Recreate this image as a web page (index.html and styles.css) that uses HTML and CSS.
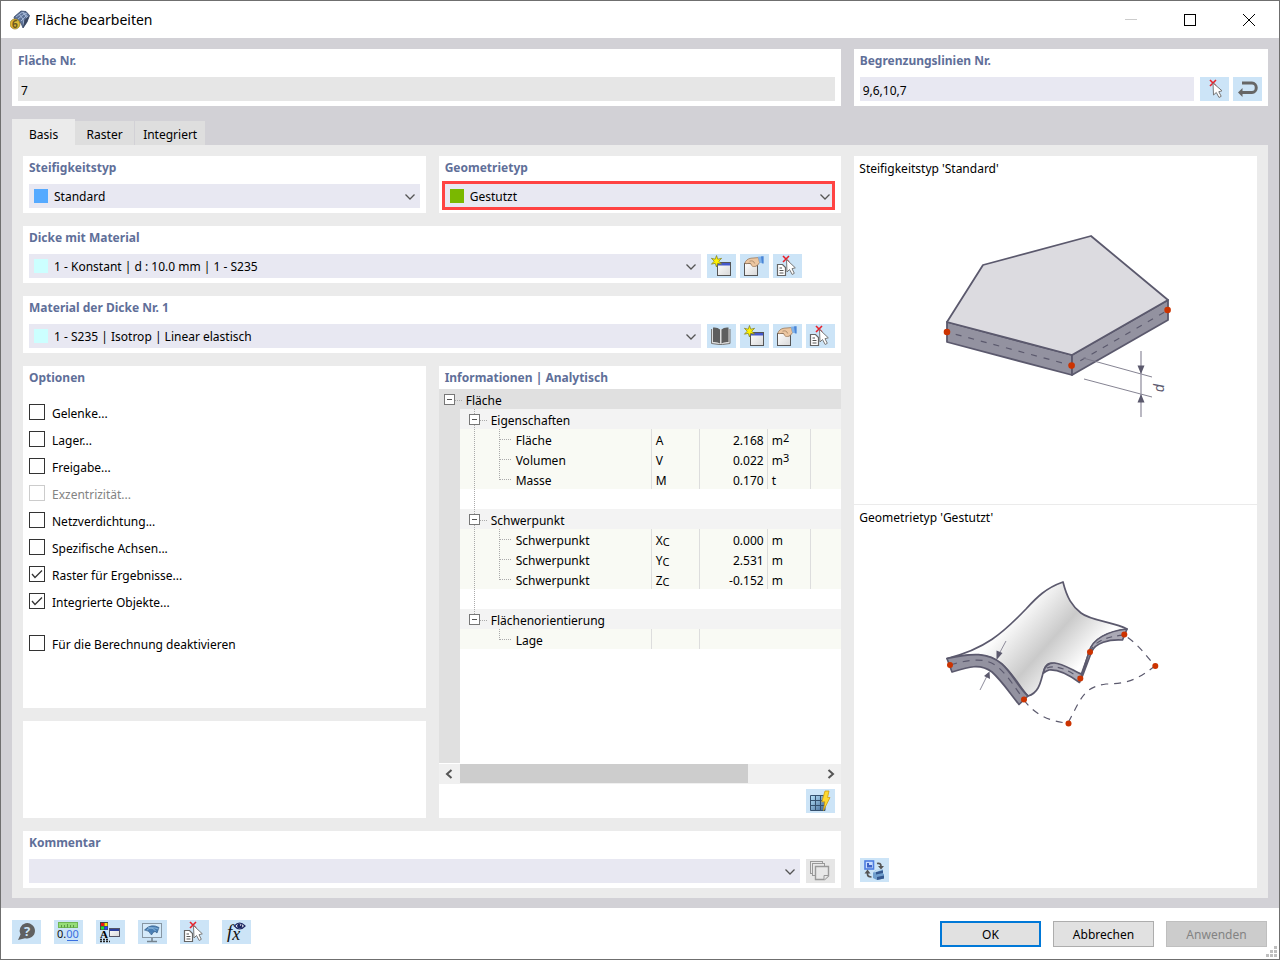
FILE: index.html
```html
<!DOCTYPE html>
<html lang="de">
  <head>
    <meta charset="utf-8">
    <title>Fläche bearbeiten</title>
    <link rel="stylesheet" href="styles.css">
  </head>
  <body>
    <!-- shared icons -->
    <svg width="0" height="0" class="sprite" aria-hidden="true">
      <defs>
        <linearGradient id="gWin" x1="0" y1="0" x2="1" y2="1">
          <stop offset="0" stop-color="#fff"/><stop offset="1" stop-color="#d8d8d8"/>
        </linearGradient>
        <linearGradient id="gGrid" x1="0" y1="0" x2="1" y2="1">
          <stop offset="0" stop-color="#b9e4fb"/><stop offset="1" stop-color="#3f6594"/>
        </linearGradient>
        <linearGradient id="gSheet" gradientUnits="userSpaceOnUse" x1="52" y1="24" x2="168" y2="128">
          <stop offset="0.1" stop-color="#fff"/><stop offset="0.25" stop-color="#fcfcfc"/><stop offset="0.53" stop-color="#cacaca"/><stop offset="0.78" stop-color="#fff"/><stop offset="1" stop-color="#bbb"/>
        </linearGradient>
      </defs>
      <symbol id="chevron" viewBox="0 0 10 6">
        <path d="M0.5 0.5L5 5L9.500 0.5" fill="none" stroke="#555" stroke-width="1.300"/>
      </symbol>
      <symbol id="new" viewBox="0 0 29 24">
        <rect x="10.500" y="8.500" width="13" height="13" fill="url(#gWin)" stroke="#555"/>
        <path d="M11 9h12v2.500H11z" fill="#4458cc"/>
        <path d="M9.500 1.500L10.800 5.200L14.600 4.300L11.800 7.200L14.600 10.200L10.700 9.300L9.500 13L8.200 9.300L4.400 10.200L7.200 7.200L4.400 4.300L8.200 5.200Z" fill="#fff200" stroke="#7d7a20" stroke-width="0.700"/>
      </symbol>
      <symbol id="edit" viewBox="0 0 29 24">
        <rect x="4.500" y="9.500" width="13" height="12" fill="url(#gWin)" stroke="#555"/>
        <path d="M12 9h5v3h-5z" fill="#4458cc"/>
        <path d="M4.800 9.300C5.500 6.500 8 4.600 11 4.200L18.500 3.600L19.500 8.500C18 11 16.500 12.600 14.800 12.400C13.300 12.800 11.500 12.300 10.800 9.700C8.500 8.500 6.500 10.500 4.800 9.300Z" fill="#ecc6a0" stroke="#9b7a5c" stroke-width="0.800"/>
        <path d="M9.500 7.200C12 6.400 14 7 14.700 9.500" fill="none" stroke="#9b7a5c" stroke-width="0.700"/>
        <path d="M17.800 2.800L23.500 2.300V9.500L19.500 8.700Z" fill="#80b2ea"/>
        <path d="M21 2.500L23.500 2.300V9.500L22 9.200Z" fill="#4a85d6"/>
      </symbol>
      <symbol id="delete" viewBox="0 0 29 24">
        <path d="M4.500 10.500h5l3 3v8h-8z" fill="#fff" stroke="#666" stroke-width="1.200"/>
        <path d="M6.500 14h2.500M6.500 16.500h4M6.500 19h4" stroke="#555"/>
        <path d="M10 2l6 6M16 2l-6 6" stroke="#e8202a" stroke-width="1.600"/>
        <path d="M13.500 5.500L14 18L16.500 15.500L19.200 20.500L21.300 19.300L19 14.700L22.300 13.800Z" fill="#fff" stroke="#777"/>
      </symbol>
    </svg>

    <div class="window">
      <header class="titlebar">
        <svg class="app-icon" width="20" height="20" viewBox="0 0 20 20">
          <path d="M4 7L11 1L16 1.500L19.500 5.500L17 12L13 18L11 13L5 11Z" fill="#5c7196" stroke="#394a6b" stroke-width="0.800"/>
          <path d="M6 7L12 2.500L17 4M8 9L14 4L18.500 7M11 11L16 6M9 4L13 9L14 15M13 2L17 8" fill="none" stroke="#a9bcdb" stroke-width="0.900"/>
          <path d="M13 18L14.500 10L19.500 5.500L17 12Z" fill="#39455e"/>
          <circle cx="5" cy="14" r="5" fill="#e0b936" stroke="#8e7420" stroke-width="0.700"/>
          <text x="2" y="18" font-family="Noto Sans, sans-serif" font-weight="bold" font-size="10" fill="#6a5820">6</text>
        </svg>
        <h1>Fläche bearbeiten</h1>
        <div class="window-controls">
          <button type="button" aria-label="Minimieren" disabled><svg width="12" height="12"><path d="M0 5.500h12" stroke="#ccc"/></svg></button>
          <button type="button" aria-label="Maximieren"><svg width="12" height="12"><rect x="0.500" y="0.500" width="11" height="11" fill="none" stroke="#000"/></svg></button>
          <button type="button" aria-label="Schließen"><svg width="12" height="12"><path d="M0 0L12 12M12 0L0 12" stroke="#000"/></svg></button>
        </div>
      </header>

      <main class="content">
        <div class="top-row">
          <section class="card">
            <label class="card-title" for="nr">Fläche Nr.</label>
            <input class="field readonly" id="nr" type="text" value="7" readonly>
          </section>
          <section class="card">
            <label class="card-title" for="lines">Begrenzungslinien Nr.</label>
            <div class="field-row">
              <input class="field" id="lines" type="text" value="9,6,10,7">
              <div class="tools">
                <button class="tool" type="button" aria-label="Auswählen">
                  <svg viewBox="0 0 29 24">
                    <path d="M10 3l6 6M16 3l-6 6" stroke="#e8202a" stroke-width="1.600"/>
                    <path d="M13 6L13.500 18L16.300 15.500L19 20.500L21.200 19.300L18.800 14.700L22 13.800Z" fill="#fff" stroke="#777"/>
                  </svg>
                </button>
                <button class="tool" type="button" aria-label="Umkehren">
                  <svg viewBox="0 0 29 24">
                    <path d="M9 6H19a4.200 4.700 0 0 1 0 9.500H8" fill="none" stroke="#666" stroke-width="3"/>
                    <path d="M5 15.500L9.500 11V20Z" fill="#666"/>
                  </svg>
                </button>
              </div>
            </div>
          </section>
        </div>

        <div class="tabs" role="tablist">
          <button class="tab active" type="button" role="tab" aria-selected="true">Basis</button>
          <button class="tab" type="button" role="tab" aria-selected="false">Raster</button>
          <button class="tab" type="button" role="tab" aria-selected="false">Integriert</button>
        </div>

        <div class="tab-panel" role="tabpanel">
          <section class="card">
            <label class="card-title" for="stiffness">Steifigkeitstyp</label>
            <div class="combo">
              <span class="swatch blue"></span>
              <select id="stiffness"><option>Standard</option></select>
              <svg class="chevron"><use href="#chevron"/></svg>
            </div>
          </section>

          <section class="card">
            <label class="card-title" for="geometry">Geometrietyp</label>
            <div class="combo highlight">
              <span class="swatch green"></span>
              <select id="geometry"><option>Gestutzt</option></select>
              <svg class="chevron"><use href="#chevron"/></svg>
            </div>
          </section>

          <section class="card wide">
            <label class="card-title" for="thickness">Dicke mit Material</label>
            <div class="field-row">
              <div class="combo">
                <span class="swatch cyan"></span>
                <select id="thickness"><option>1 - Konstant | d : 10.0 mm | 1 - S235</option></select>
                <svg class="chevron"><use href="#chevron"/></svg>
              </div>
              <div class="tools four">
                <button class="tool" type="button" aria-label="Neue Dicke"><svg><use href="#new"/></svg></button>
                <button class="tool" type="button" aria-label="Dicke bearbeiten"><svg><use href="#edit"/></svg></button>
                <button class="tool" type="button" aria-label="Dicke auswählen"><svg><use href="#delete"/></svg></button>
              </div>
            </div>
          </section>

          <section class="card wide">
            <label class="card-title" for="material">Material der Dicke Nr. 1</label>
            <div class="field-row">
              <div class="combo">
                <span class="swatch cyan"></span>
                <select id="material"><option>1 - S235 | Isotrop | Linear elastisch</option></select>
                <svg class="chevron"><use href="#chevron"/></svg>
              </div>
              <div class="tools four">
                <button class="tool" type="button" aria-label="Bibliothek">
                  <svg viewBox="0 0 29 24">
                    <path d="M4.500 5V19.500L12 20.500H15.500L23 19.500V5" fill="#ddd" stroke="#777"/>
                    <path d="M6 3.500Q10.500 3 13 5.500V19.500Q10.500 17.500 6 18Z" fill="#5e5e5e"/>
                    <path d="M21.500 3.500Q17 3 14.500 5.500V19.500Q17 17.500 21.500 18Z" fill="#5e5e5e"/>
                  </svg>
                </button>
                <button class="tool" type="button" aria-label="Neues Material"><svg><use href="#new"/></svg></button>
                <button class="tool" type="button" aria-label="Material bearbeiten"><svg><use href="#edit"/></svg></button>
                <button class="tool" type="button" aria-label="Material auswählen"><svg><use href="#delete"/></svg></button>
              </div>
            </div>
          </section>

          <div class="options-column">
            <section class="card options">
              <h2 class="card-title">Optionen</h2>
              <label class="check"><input type="checkbox">Gelenke...</label>
              <label class="check"><input type="checkbox">Lager...</label>
              <label class="check"><input type="checkbox">Freigabe...</label>
              <label class="check disabled"><input type="checkbox" disabled>Exzentrizität...</label>
              <label class="check"><input type="checkbox">Netzverdichtung...</label>
              <label class="check"><input type="checkbox">Spezifische Achsen...</label>
              <label class="check"><input type="checkbox" checked>Raster für Ergebnisse...</label>
              <label class="check"><input type="checkbox" checked>Integrierte Objekte...</label>
              <label class="check last"><input type="checkbox">Für die Berechnung deaktivieren</label>
            </section>
            <section class="card empty"></section>
          </div>

          <section class="card info">
            <h2 class="card-title">Informationen | Analytisch</h2>
            <div class="tree-area">
              <table class="tree">
                <colgroup>
                  <col class="c-gutter"><col class="c-name"><col class="c-symbol"><col class="c-value"><col class="c-unit"><col>
                </colgroup>
                <tbody>
                  <tr class="root"><th colspan="6"><div class="node"><button class="toggle" type="button" aria-label="Fläche zuklappen"></button><i class="dots"></i>Fläche</div></th></tr>
                  <tr class="group"><td class="gutter"></td><th class="through" colspan="5"><div class="node"><button class="toggle" type="button" aria-label="Eigenschaften zuklappen"></button><i class="dots"></i>Eigenschaften</div></th></tr>
                  <tr class="leaf"><td class="gutter"></td><th class="through mid">Fläche</th><td>A</td><td class="num">2.168</td><td>m<sup>2</sup></td><td></td></tr>
                  <tr class="leaf"><td class="gutter"></td><th class="through mid">Volumen</th><td>V</td><td class="num">0.022</td><td>m<sup>3</sup></td><td></td></tr>
                  <tr class="leaf"><td class="gutter"></td><th class="through end">Masse</th><td>M</td><td class="num">0.170</td><td>t</td><td></td></tr>
                  <tr><td class="gutter"></td><td class="through" colspan="5"></td></tr>
                  <tr class="group"><td class="gutter"></td><th class="through" colspan="5"><div class="node"><button class="toggle" type="button" aria-label="Schwerpunkt zuklappen"></button><i class="dots"></i>Schwerpunkt</div></th></tr>
                  <tr class="leaf"><td class="gutter"></td><th class="through mid">Schwerpunkt</th><td>X<sub>C</sub></td><td class="num">0.000</td><td>m</td><td></td></tr>
                  <tr class="leaf"><td class="gutter"></td><th class="through mid">Schwerpunkt</th><td>Y<sub>C</sub></td><td class="num">2.531</td><td>m</td><td></td></tr>
                  <tr class="leaf"><td class="gutter"></td><th class="through end">Schwerpunkt</th><td>Z<sub>C</sub></td><td class="num">-0.152</td><td>m</td><td></td></tr>
                  <tr><td class="gutter"></td><td class="through" colspan="5"></td></tr>
                  <tr class="group"><td class="gutter"></td><th class="through-end" colspan="5"><div class="node"><button class="toggle" type="button" aria-label="Flächenorientierung zuklappen"></button><i class="dots"></i>Flächenorientierung</div></th></tr>
                  <tr class="leaf"><td class="gutter"></td><th class="end">Lage</th><td></td><td colspan="3"></td></tr>
                </tbody>
              </table>
            </div>
            <div class="scrollbar">
              <button type="button" aria-label="Nach links"><svg width="8" height="10"><path d="M6.500 1L2 5L6.500 9" fill="none" stroke="#555" stroke-width="2"/></svg></button>
              <div class="track"><div class="thumb"></div></div>
              <button type="button" aria-label="Nach rechts"><svg width="8" height="10"><path d="M1.500 1L6 5L1.500 9" fill="none" stroke="#555" stroke-width="2"/></svg></button>
            </div>
            <div class="info-tools">
              <button class="tool" type="button" aria-label="Neu berechnen">
                <svg viewBox="0 0 29 24">
                  <path d="M4.500 6.500h14.500v15H4.500z" fill="url(#gGrid)" stroke="#35506e"/>
                  <path d="M4.500 11.500H19M4.500 16.500H19M9.500 6.500v15M14.500 6.500v15" stroke="#35506e"/>
                  <path d="M19 2h4L21.500 8.500H24L17.500 21.500L18.800 12.800H15.800Z" fill="#ffd92e" stroke="#cf9d12" stroke-width="0.800"/>
                </svg>
              </button>
            </div>
          </section>

          <section class="card wide">
            <label class="card-title" for="comment">Kommentar</label>
            <div class="field-row">
              <div class="combo">
                <select id="comment"><option></option></select>
                <svg class="chevron"><use href="#chevron"/></svg>
              </div>
              <div class="tools">
                <button class="tool off" type="button" aria-label="Kommentare" disabled>
                  <svg viewBox="0 0 29 24">
                    <g fill="#e8e8e8" stroke="#999">
                      <rect x="4.500" y="2.500" width="12" height="12"/>
                      <rect x="6.500" y="4.500" width="12" height="12"/>
                      <path d="M9.500 7.500h13v9.500l-4 3.500h-9z" stroke-width="1.400"/>
                      <path d="M18 21v-4.500h4.500"/>
                    </g>
                  </svg>
                </button>
              </div>
            </div>
          </section>

          <aside class="card preview">
            <section class="preview-part">
              <p>Steifigkeitstyp 'Standard'</p>
              <svg class="drawing" width="252" height="210" viewBox="0 0 252 210">
                <g stroke="#5b596d" stroke-width="1.800" stroke-linejoin="round">
                  <path d="M17 101L142 134V154L17 121Z" fill="#9392a0"/>
                  <path d="M142 134L238 79V99L142 154Z" fill="#9392a0"/>
                  <path d="M17 101L53 44L161 15L238 79L142 134Z" fill="#dcdbe0"/>
                </g>
                <path d="M17 111L142 144.500L238 89" fill="none" stroke="#5b596d" stroke-width="1.200" stroke-dasharray="6 7" stroke-dashoffset="4"/>
                <path d="M153 137L222 156M154 158L222 176" stroke="#777586" stroke-width="0.900"/>
                <path d="M211 130V196" stroke="#9d9ba9" stroke-width="1.400"/>
                <path d="M207.500 144.500h7L211 153ZM207.500 181.500h7L211 173Z" fill="#5b596d"/>
                <g fill="#cc3300"><circle cx="17" cy="111" r="3.300"/><circle cx="141.600" cy="144.600" r="3.300"/><circle cx="237.600" cy="89" r="3.300"/></g>
                <text transform="translate(234 171) rotate(-90)" font-family="Liberation Sans, sans-serif" font-style="italic" font-size="14" fill="#5b596d">d</text>
              </svg>
            </section>
            <section class="preview-part second">
              <p>Geometrietyp 'Gestutzt'</p>
              <svg class="drawing" width="252" height="170" viewBox="0 0 252 170">
                <g stroke="#5b596d" stroke-width="1.700" stroke-linejoin="round">
                  <path d="M17 88.500C55 79 73 63 96 39C107 27 116 18 133 12C137 28 142 36 151 43C161 51 185 52 197 59C178 62 164 69 160 80L150 108C142 102 132 93 121 93C109 94 116 121 98 126C92 120 85 107 76 98C61 82 42 83 17 88.500Z" fill="url(#gSheet)"/>
                  <path d="M17 88.500C42 83 58 82 72 94C82 103 88 117 98 126L89 134.500C79 122 72 111 62 102C50 93 38 97 22 102Z" fill="#9392a0"/>
                  <path d="M113.500 103C114 96 119 93 124 93C132 93 142 100 152 104.500L149.500 112.500C142 107 130 99 119 100Q116 101 113.500 103Z" fill="#aaa9b5"/>
                  <path d="M152 104.500L159 82C162 69 178 61 197 59L192.500 70C179 69 165 73 161.500 82L151.500 108.500Z" fill="#aaa9b5"/>
                </g>
                <g fill="none" stroke="#5b596d" stroke-width="1.200">
                  <path d="M20 95C44 88 58 88 69 98C79 107 85 118 94 129.500" stroke-dasharray="7 6"/>
                  <path d="M117 98C127 94 139 101 150 108M160 82C164 70 181 66 194 65" stroke-dasharray="6 5"/>
                  <path d="M94 130C103 143 119 152 138 153C151 129 153 117 176 114C201 114 210 107 225 96C215 84 207 73 194 65" stroke-dasharray="7 6"/>
                </g>
                <path d="M76 71L69 84M50 120L57 106" stroke="#8e8c9b"/>
                <path d="M66.500 80.500L72.500 83L66.500 90ZM54 106L60 109L59.500 101.500Z" fill="#5b596d"/>
                <g fill="#cc3300"><circle cx="20" cy="95" r="3"/><circle cx="94" cy="129.600" r="3"/><circle cx="150.300" cy="108.500" r="3"/><circle cx="160" cy="82" r="3"/><circle cx="194.300" cy="64.500" r="3"/><circle cx="225.300" cy="96" r="3"/><circle cx="138.500" cy="153.600" r="3"/></g>
              </svg>
              <button class="tool" type="button" aria-label="Ansicht wechseln">
                <svg viewBox="0 0 29 24">
                  <rect x="5" y="3" width="8.500" height="8" fill="#c6dcff" stroke="#4d7de0" stroke-width="1.600"/>
                  <path d="M7 5h2v2h3v2.500H7z" fill="#3c62c4"/>
                  <path d="M17 5.500q4-1 4 3" fill="none" stroke="#555" stroke-width="1.700"/>
                  <path d="M18 8h6l-3 3.500z" fill="#555"/>
                  <path d="M7.500 14v2q0 3 4 3" fill="none" stroke="#555" stroke-width="1.700"/>
                  <path d="M4.500 15.500h6l-3-4z" fill="#555"/>
                  <path d="M13 14.500L16 12L23 11.500V15.500L24 16V20.500L17 22L13 20Z" fill="#719fce"/>
                  <path d="M16 14L23 12.500V15L16 16.500ZM17 19L24 17.500V20.500L17 22Z" fill="#35588f"/>
                  <path d="M13 14.500L16 12L23 11.500L16 14Z" fill="#c3ddf2"/>
                </svg>
              </button>
            </section>
          </aside>
        </div>
      </main>

      <footer class="footer">
        <div class="footer-tools">
          <button class="tool" type="button" aria-label="Hilfe">
            <svg viewBox="0 0 29 24">
              <path d="M6 20L8.500 14.500A7.700 7.700 0 1 1 13 18.200Z" fill="#606060"/>
              <text x="12" y="16" font-family="Noto Sans, sans-serif" font-weight="bold" font-size="13" fill="#cce4f7">?</text>
            </svg>
          </button>
          <button class="tool" type="button" aria-label="Einheiten">
            <svg viewBox="0 0 29 24">
              <rect x="4.500" y="2.500" width="19" height="5" fill="#95dc79" stroke="#6fb653"/>
              <path d="M7.500 5v2.500M10.500 5v2.500M13.500 4v3.500M16.500 5v2.500M19.500 5v2.500" stroke="#5b9a45"/>
              <text x="3" y="18" font-family="Noto Sans, sans-serif" font-size="11" fill="#111">0.<tspan fill="#3a6fe0">00</tspan></text>
              <path d="M13 20.500h11" stroke="#3a6fe0"/>
            </svg>
          </button>
          <button class="tool" type="button" aria-label="Farben">
            <svg viewBox="0 0 29 24">
              <rect x="4" y="2" width="8" height="8" fill="#444"/>
              <path d="M5 3h3v3H5z" fill="#e11"/><path d="M8.500 3h3v3h-3z" fill="#fd0"/>
              <path d="M5 6.500h3v3H5z" fill="#2d3"/><path d="M8.500 6.500h3v3h-3z" fill="#24f"/>
              <text x="4" y="18" font-family="Liberation Serif, serif" font-weight="bold" font-size="11">A</text>
              <path d="M4 19.500h9M4 21.500h10" stroke="#222" stroke-width="1.500" stroke-dasharray="2 1"/>
              <rect x="13.500" y="8.500" width="10" height="8" fill="url(#gWin)" stroke="#556"/>
              <path d="M14 9h9v2h-9z" fill="#2c3f9c"/>
            </svg>
          </button>
          <button class="tool" type="button" aria-label="Darstellung">
            <svg viewBox="0 0 29 24">
              <rect x="4.500" y="3.500" width="19" height="14" fill="#d5eafa" stroke="#8796a3"/>
              <path d="M14 18v3M9 21.500h10" stroke="#75838f" stroke-width="1.600"/>
              <path d="M6.500 10Q13 3 21 7.500L19 13Q16 9.500 13.500 15Q11 10 6.500 10Z" fill="#4a7fb5" stroke="#345d88" stroke-width="0.700"/>
              <path d="M10 7.500Q16 8 17.500 11M9 10Q13 6 20.500 9" fill="none" stroke="#9cc7ea" stroke-width="0.700"/>
            </svg>
          </button>
          <button class="tool" type="button" aria-label="Objekt auswählen"><svg><use href="#delete"/></svg></button>
          <button class="tool" type="button" aria-label="Formeln">
            <svg viewBox="0 0 29 24">
              <text x="5" y="18" font-family="Liberation Serif, serif" font-style="italic" font-size="19" fill="#111">f<tspan dy="2" font-size="18">x</tspan></text>
              <path d="M12.500 6Q17.500 0 23 6Q17.500 12 12.500 6Z" fill="#fff" stroke="#1c2560" stroke-width="1.200"/>
              <circle cx="17.700" cy="6" r="2.600" fill="#1c2560"/><circle cx="18.500" cy="5" r="0.700" fill="#fff"/>
            </svg>
          </button>
        </div>
        <div class="actions">
          <button class="action primary" type="button">OK</button>
          <button class="action" type="button">Abbrechen</button>
          <button class="action" type="button" disabled>Anwenden</button>
        </div>
        <svg class="grip" width="11" height="11"><path d="M8 0h3v3H8zM4 4h3v3H4zM8 4h3v3H8zM0 8h3v3H0zM4 8h3v3H4zM8 8h3v3H8z" fill="#bfbfbf"/></svg>
      </footer>
    </div>
  </body>
</html>
```
FILE: styles.css
```css
* {
  box-sizing: border-box;
}

body {
  margin: 0;
  font-family: "Noto Sans", "Open Sans", sans-serif;
  font-size: 12px;
  line-height: 20px;
  color: #000;
}

button,
input,
select {
  font: inherit;
  color: inherit;
  border: 0;
  margin: 0;
  padding: 0;
  border-radius: 0;
  background: none;
}

svg {
  display: block;
}

.sprite {
  position: absolute;
}

.window {
  display: flex;
  flex-direction: column;
  min-height: 100vh;
  border: 1px solid #6f6f6f;
  background-color: #fff;
}

/* title bar */
.titlebar {
  display: flex;
  align-items: center;
  height: 37px;
  padding: 0 1px 0 9px;
}

.titlebar h1 {
  margin: 0 auto 0 5px;
  font-size: 14px;
  font-weight: 400;
}

.window-controls {
  display: flex;
}

.window-controls button {
  display: flex;
  align-items: center;
  justify-content: center;
  width: 59px;
  height: 36px;
}

/* content */
.content {
  display: flex;
  flex-direction: column;
  flex: 1;
  padding: 11px 11px 10px;
  background-color: #d2d1d6;
}

.top-row {
  display: grid;
  grid-template-columns: 2fr 1fr;
  gap: 13px;
}

.card {
  min-width: 0;
  padding: 0 6px 5px;
  background-color: #fff;
}

.card-title {
  display: block;
  height: 28px;
  margin: 0;
  font-size: 12px;
  font-weight: 700;
  line-height: 23px;
  color: #5f6f99;
}

.field {
  display: block;
  width: 100%;
  height: 24px;
  padding: 2px 3px 0;
  background-color: #e8e8f2;
}

.field.readonly {
  background-color: #e6e6e6;
}

.field-row {
  display: flex;
  gap: 6px;
}

.tools {
  display: flex;
  gap: 4px;
}

.tools.four {
  flex: 0 0 128px;
}

.tool {
  flex: none;
  width: 29px;
  height: 24px;
  background-color: #cce4f7;
}

.tool svg {
  width: 29px;
  height: 24px;
}

.tool.off {
  background-color: #e6e6e6;
}

.combo {
  display: flex;
  flex: 1;
  align-items: center;
  height: 24px;
  padding: 0 5px;
  background-color: #e8e8f2;
}

.combo select {
  flex: 1;
  min-width: 0;
  height: 24px;
  margin-left: 6px;
  padding-top: 2px;
  appearance: none;
}

.combo.highlight {
  height: 29px;
  margin: -3px 0 -2px -3px;
  padding-right: 2px;
  border: 3px solid #ff4343;
}

.swatch {
  width: 14px;
  height: 14px;
}

.swatch.blue {
  background-color: #55aaff;
}

.swatch.green {
  background-color: #7ab800;
}

.swatch.cyan {
  background-color: #ccffff;
}

.chevron {
  width: 10px;
  height: 6px;
  margin-top: 2px;
}

/* tabs */
.tabs {
  display: flex;
  align-items: flex-end;
  gap: 1px;
  margin-top: 13px;
}

.tab {
  min-width: 59px;
  height: 24px;
  padding: 3px 8px 0;
  background-color: #dedede;
}

.tab.active {
  height: 26px;
  margin-right: -1px;
  padding: 5px 17px 0;
  background-color: #ebebeb;
}

.tab-panel {
  display: grid;
  flex: 1;
  grid-template-columns: repeat(3, minmax(0, 1fr));
  grid-template-rows: auto auto auto 1fr auto;
  gap: 13px;
  padding: 11px 11px 10px;
  background-color: #ebebeb;
}

.wide {
  grid-column: 1 / 3;
}

/* options */
.options-column {
  display: flex;
  flex-direction: column;
  gap: 13px;
}

.options {
  flex: 1;
}

.options .card-title {
  height: 33px;
}

.empty {
  height: 97px;
}

.check {
  display: flex;
  align-items: center;
  gap: 7px;
  height: 27px;
  padding-top: 2px;
}

.check.last {
  margin-top: 15px;
}

.check.disabled {
  color: #838383;
}

.check input {
  width: 16px;
  height: 16px;
  margin-bottom: 4px;
  border: 1px solid #333;
  background-color: #fff;
  appearance: none;
}

.check input:disabled {
  border-color: #ccc;
}

.check input:checked {
  background-image: url("data:image/svg+xml,%3Csvg xmlns='http://www.w3.org/2000/svg' width='14' height='14'%3E%3Cpath d='M2 7l3 3.500L12 3.500' fill='none' stroke='%23333' stroke-width='1.300'/%3E%3C/svg%3E");
}

/* information tree */
.info {
  display: flex;
  flex-direction: column;
  padding: 0;
}

.info .card-title {
  height: 23px;
  padding-left: 6px;
}

.tree-area {
  flex: 1;
  margin-bottom: 1px;
  background: linear-gradient(#e0e0e0, #e0e0e0) 0 0 / 21px 100% no-repeat;
}

.tree {
  width: 100%;
  table-layout: fixed;
  border-collapse: separate;
  border-spacing: 0;
}

.c-gutter {
  width: 21px;
}

.c-name {
  width: 191px;
}

.c-symbol {
  width: 48px;
}

.c-value {
  width: 68px;
}

.c-unit {
  width: 43px;
}

.tree tr {
  height: 20px;
}

.tree th,
.tree td {
  height: 20px;
  padding: 3px 4px 0;
  font-weight: 400;
  line-height: 17px;
  text-align: left;
  white-space: nowrap;
  --dots-v: repeating-linear-gradient(#aaa 0 1px, transparent 1px 2px);
  --dots-h: repeating-linear-gradient(90deg, #aaa 0 1px, transparent 1px 2px);
}

.tree .root {
  background-color: #e0e0e0;
}

.tree .group th {
  background-color: #f3f3f3;
}

.tree .leaf th,
.tree .leaf td {
  background-color: #f9faf4;
}

.tree .leaf td + td,
.tree .leaf th + td {
  border-left: 1px solid #ddd;
}

.tree .gutter.gutter {
  background-color: #e0e0e0;
}

.tree .leaf th {
  padding-left: 56px;
}

.tree .num {
  padding-right: 3px;
  text-align: right;
}

.tree .through {
  background-image: var(--dots-v);
  background-position: 14px 0;
  background-size: 1px 100%;
  background-repeat: no-repeat;
}

.tree .through-end {
  background: var(--dots-v) 14px 0 / 1px 6px no-repeat;
}

.tree .mid {
  background-image: var(--dots-v), var(--dots-v), var(--dots-h);
  background-position: 14px 0, 39px 0, 40px 10px;
  background-size: 1px 100%, 1px 100%, 12px 1px;
}

.tree .through.end {
  background-image: var(--dots-v), var(--dots-v), var(--dots-h);
  background-position: 14px 0, 39px 0, 40px 10px;
  background-size: 1px 100%, 1px 11px, 12px 1px;
}

.tree .end:not(.through) {
  background-image: var(--dots-v), var(--dots-h);
  background-position: 39px 0, 40px 10px;
  background-size: 1px 11px, 12px 1px;
  background-repeat: no-repeat;
}

.tree sup,
.tree sub {
  font-size: 11px;
  line-height: 0;
}

.tree sup {
  vertical-align: 3px;
}

.tree sub {
  vertical-align: -1px;
}

.node {
  display: flex;
  align-items: center;
  height: 17px;
  padding-left: 5px;
}

.root .node {
  padding-left: 1px;
}

.toggle {
  width: 11px;
  height: 11px;
  margin-bottom: 2px;
  border: 1px solid #777;
  background: linear-gradient(#555, #555) 2px 4px / 5px 1px no-repeat #fff;
}

.dots {
  width: 7px;
  height: 1px;
  margin-right: 4px;
  background-image: var(--dots-h);
}

.scrollbar {
  display: flex;
  height: 20px;
  background-color: #f0f0f0;
}

.scrollbar button {
  display: flex;
  align-items: center;
  justify-content: center;
  width: 21px;
}

.track {
  flex: 1;
}

.thumb {
  width: 80%;
  height: 19px;
  background-color: #cdcdcd;
}

.info-tools {
  display: flex;
  justify-content: flex-end;
  padding: 5px 6px;
}

/* preview */
.preview {
  display: flex;
  flex-direction: column;
  grid-column: 3;
  grid-row: 1 / 6;
  padding: 0;
}

.preview-part {
  flex: 0 0 349px;
  padding: 3px 5px 0;
  border-bottom: 1px solid #ebebeb;
}

.preview-part p {
  margin: 0;
}

.drawing {
  margin: 42px auto 0;
}

.preview-part.second {
  display: flex;
  flex-direction: column;
  flex: 1;
  padding-bottom: 6px;
  border-bottom: 0;
}

.second .tool {
  margin: auto 0 0 1px;
}

/* footer */
.footer {
  position: relative;
  display: flex;
  justify-content: space-between;
  padding: 12px 12px 12px 11px;
  background-color: #fff;
}

.footer-tools {
  display: flex;
  gap: 13px;
}

.actions {
  display: flex;
  gap: 12px;
  padding-top: 1px;
}

.action {
  width: 101px;
  height: 26px;
  padding-top: 2px;
  border: 1px solid #adadad;
  background-color: #e1e1e1;
}

.action.primary {
  padding-top: 1px;
  border: 2px solid #0078d7;
}

.action:disabled {
  border-color: #bfbfbf;
  background-color: #ccc;
  color: #838383;
}

.grip {
  position: absolute;
  right: 2px;
  bottom: 2px;
}
```
